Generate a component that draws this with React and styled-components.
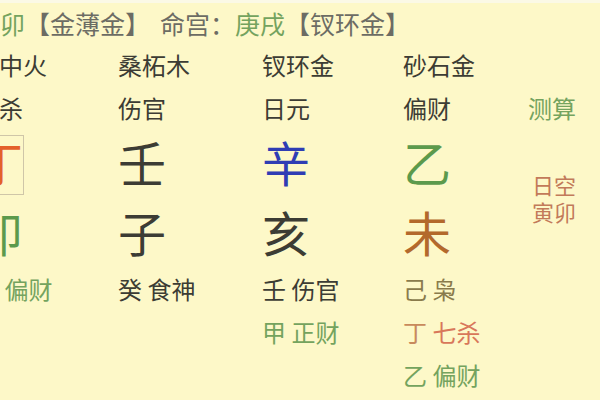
import React from "react";
import styled, { createGlobalStyle } from "styled-components";

const Global = createGlobalStyle`
  html, body { margin: 0; padding: 0; background: #fdf8c8; }
  body { font-family: "Noto Sans CJK SC", "Noto Sans", sans-serif; }
`;

const C = {
  dark: "#3c3c34",
  gray: "#6c6c64",
  green: "#74a35e",
  ganGreen: "#5c9a4c",
  blue: "#2f3db4",
  brown: "#b3692c",
  red: "#e4602a",
  note: "#c27a5a",
  olive: "#8a7b4c",
  ding: "#c88a5c",
  sha: "#d8775a",
};

const Page = styled.div`
  width: 600px;
  height: 400px;
  overflow: hidden;
  box-sizing: border-box;
  background: #fdf8c8;
  border-top: 3px solid #fbf9e6;
`;

const Header = styled.div`
  margin-left: -25px;
  font-size: 25px;
  line-height: 40px;
  white-space: nowrap;
  color: ${C.gray};
`;

const Tone = styled.span`
  color: ${(p) => p.$color};
`;

const Label = styled.span`
  margin-left: 10px;
`;

const Chart = styled.div`
  display: grid;
  margin-left: -25px;
  grid-template-columns: 143px 144px 141px 125px 1fr;
  grid-template-rows: 43px 43px 70px 68px auto;
  grid-auto-flow: column;
`;

const Cell = styled.div`
  font-size: 24px;
  line-height: 43px;
  white-space: nowrap;
  color: ${(p) => p.$color || C.dark};
`;

const BigCell = styled.div`
  display: flex;
  align-items: flex-start;
  padding-top: 6px;
  font-size: 48px;
  line-height: 1;
`;

const Glyph = styled.span`
  display: inline-block;
  color: ${(p) => p.$color};
  padding: 1px 0 9px 1px;
  margin-left: -2px;
  border: 1px solid ${(p) => (p.$boxed ? "#cfc6a8" : "transparent")};
`;

const Note = styled.div`
  grid-row: span 2;
  display: flex;
  align-items: center;
  padding-left: 4px;
  font-size: 22px;
  line-height: 27px;
  color: ${C.note};
`;

const Hidden = styled.div`
  display: flex;
  flex-direction: column;
`;

const pillars = [
  {
    nayin: "炉中火",
    shishen: "七杀",
    gan: "丁",
    ganColor: C.red,
    boxed: true,
    zhi: "卯",
    zhiColor: C.ganGreen,
    hidden: [[["乙 偏财", C.green]]],
  },
  {
    nayin: "桑柘木",
    shishen: "伤官",
    gan: "壬",
    ganColor: C.dark,
    zhi: "子",
    zhiColor: C.dark,
    hidden: [[["癸 食神", C.dark]]],
  },
  {
    nayin: "钗环金",
    shishen: "日元",
    gan: "辛",
    ganColor: C.blue,
    zhi: "亥",
    zhiColor: C.dark,
    hidden: [[["壬 伤官", C.dark]], [["甲 正财", C.green]]],
  },
  {
    nayin: "砂石金",
    shishen: "偏财",
    gan: "乙",
    ganColor: C.ganGreen,
    zhi: "未",
    zhiColor: C.brown,
    hidden: [
      [["己 枭", C.olive]],
      [["丁 ", C.ding], ["七杀", C.sha]],
      [["乙 偏财", C.green]],
    ],
  },
];

export default function App() {
  return (
    <Page>
      <Global />
      <Header>
        <Tone $color={C.green}>癸卯</Tone>【金薄金】
        <Label>命宫：</Label>
        <Tone $color={C.green}>庚戌</Tone>【钗环金】
      </Header>
      <Chart>
        {pillars.map((p, i) => (
          <React.Fragment key={i}>
            <Cell>{p.nayin}</Cell>
            <Cell>{p.shishen}</Cell>
            <BigCell>
              <Glyph $color={p.ganColor} $boxed={p.boxed}>
                {p.gan}
              </Glyph>
            </BigCell>
            <BigCell>
              <Glyph $color={p.zhiColor}>{p.zhi}</Glyph>
            </BigCell>
            <Hidden>
              {p.hidden.map((line, j) => (
                <Cell key={j}>
                  {line.map(([t, c], k) => (
                    <Tone key={k} $color={c}>
                      {t}
                    </Tone>
                  ))}
                </Cell>
              ))}
            </Hidden>
          </React.Fragment>
        ))}
        <Cell />
        <Cell $color={C.green}>测算</Cell>
        <Note>
          日空
          <br />
          寅卯
        </Note>
        <Hidden />
      </Chart>
    </Page>
  );
}
